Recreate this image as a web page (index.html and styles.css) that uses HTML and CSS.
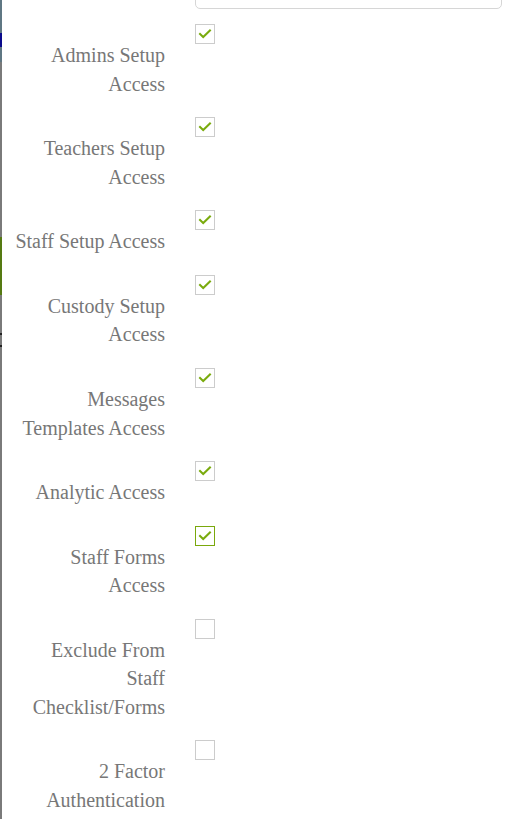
FILE: index.html
```html
<!DOCTYPE html>
<html lang="en">
<head>
<meta charset="utf-8">
<title>Access settings</title>
<link rel="stylesheet" href="styles.css">
</head>
<body>
<div class="page">
  <div class="edge"></div>
  <form class="form">
    <div class="row">
      <div class="label"></div>
      <div class="field"><input class="text-input" type="text"></div>
    </div>
    <div class="row check-row">
      <label class="label">Admins Setup Access</label>
      <div class="field"><span class="box checked"><svg viewBox="0 0 20 20"><path d="M4.5 10 L8 13.3 L15.5 6.2"/></svg></span></div>
    </div>
    <div class="row check-row">
      <label class="label">Teachers Setup Access</label>
      <div class="field"><span class="box checked"><svg viewBox="0 0 20 20"><path d="M4.5 10 L8 13.3 L15.5 6.2"/></svg></span></div>
    </div>
    <div class="row check-row">
      <label class="label">Staff Setup Access</label>
      <div class="field"><span class="box checked"><svg viewBox="0 0 20 20"><path d="M4.5 10 L8 13.3 L15.5 6.2"/></svg></span></div>
    </div>
    <div class="row check-row">
      <label class="label">Custody Setup Access</label>
      <div class="field"><span class="box checked"><svg viewBox="0 0 20 20"><path d="M4.5 10 L8 13.3 L15.5 6.2"/></svg></span></div>
    </div>
    <div class="row check-row">
      <label class="label">Messages Templates Access</label>
      <div class="field"><span class="box checked"><svg viewBox="0 0 20 20"><path d="M4.5 10 L8 13.3 L15.5 6.2"/></svg></span></div>
    </div>
    <div class="row check-row">
      <label class="label">Analytic Access</label>
      <div class="field"><span class="box checked"><svg viewBox="0 0 20 20"><path d="M4.5 10 L8 13.3 L15.5 6.2"/></svg></span></div>
    </div>
    <div class="row check-row">
      <label class="label">Staff Forms Access</label>
      <div class="field"><span class="box checked focused"><svg viewBox="0 0 20 20"><path d="M4.5 10 L8 13.3 L15.5 6.2"/></svg></span></div>
    </div>
    <div class="row check-row">
      <label class="label">Exclude From Staff Checklist/Forms</label>
      <div class="field"><span class="box"></span></div>
    </div>
    <div class="row check-row">
      <label class="label">2 Factor Authentication</label>
      <div class="field"><span class="box"></span></div>
    </div>
  </form>
</div>
</body>
</html>
```

FILE: styles.css
```css
html, body {
  margin: 0;
  padding: 0;
  background: #ffffff;
  overflow: hidden;
}

.page {
  display: flex;
  min-height: 819px;
}

.edge {
  flex: 0 0 2px;
  background: linear-gradient(to bottom,
    #5f7783 0px, #5f7783 33px,
    #0a0a8c 33px, #0a0a8c 47px,
    #5f7783 47px, #5f7783 62px,
    #7a7a7a 62px, #7a7a7a 237px,
    #557a12 237px, #557a12 295px,
    #7a7a7a 295px, #7a7a7a 333px,
    #222222 333px, #222222 335px,
    #7a7a7a 335px, #7a7a7a 345px,
    #222222 345px, #222222 347px,
    #7a7a7a 347px, #7a7a7a 100%);
}

.form {
  flex: 1;
  margin: 0 7px 0 11.6px;
  font-family: "Liberation Serif", "Times New Roman", serif;
  font-size: 20px;
  line-height: 28.57px;
  color: #777777;
}

.row {
  display: grid;
  grid-template-columns: 151.4px 1fr;
  column-gap: 30px;
}

.row:first-child {
  margin-top: -25px;
  margin-bottom: 15px;
}

.check-row {
  margin-bottom: 19px;
}

.check-row .label {
  font-family: "Liberation Serif", serif;
  padding-top: 17px;
  text-align: right;
}

.text-input {
  display: block;
  box-sizing: border-box;
  width: 100%;
  height: 34px;
  border: 1px solid #d6d6d6;
  border-radius: 5px;
  background: #ffffff;
  margin: 0;
}

.box {
  display: block;
  box-sizing: border-box;
  width: 20px;
  height: 20px;
  border: 1px solid #cccccc;
  background: #ffffff;
}

.box.focused {
  border-color: #7aa80c;
}

.box svg {
  display: block;
  width: 18px;
  height: 18px;
}

.box path {
  fill: none;
  stroke: #7aab0e;
  stroke-width: 2.3;
  stroke-linecap: square;
  stroke-linejoin: miter;
}
```
